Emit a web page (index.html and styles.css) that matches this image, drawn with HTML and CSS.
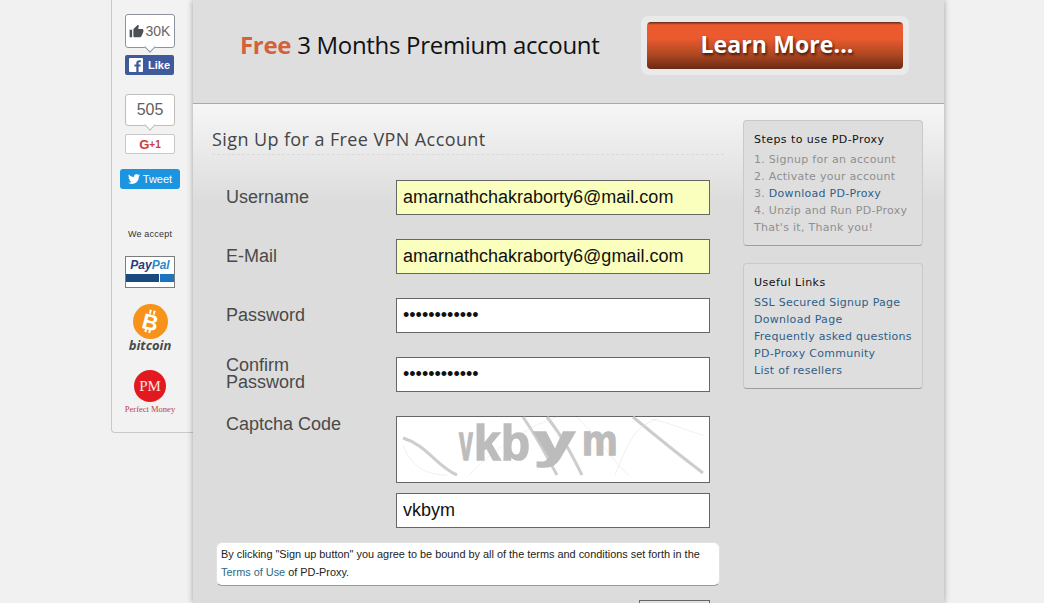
FILE: index.html
```html
<!DOCTYPE html>
<html lang="en">
<head>
<meta charset="utf-8">
<title>Sign Up for a Free VPN Account</title>
<link rel="stylesheet" href="styles.css">
</head>
<body>
<div class="page">
  <aside class="social">
    <div class="bubble bubble-like">
      <svg class="thumb" viewBox="0 0 24 24"><path d="M1 21h4V9H1v12zm22-11c0-1.1-.9-2-2-2h-6.31l.95-4.57.03-.32c0-.41-.17-.79-.44-1.06L14.17 1 7.59 7.59C7.22 7.95 7 8.45 7 9v10c0 1.1.9 2 2 2h9c.83 0 1.54-.5 1.84-1.22l3.02-7.05c.09-.23.14-.47.14-.73v-2z"/></svg>
      <span>30K</span>
    </div>
    <div class="fb-btn">
      <svg class="fb-icon" viewBox="0 0 14 14"><path fill="#fff" d="M1 0h12a1 1 0 0 1 1 1v12a1 1 0 0 1-1 1H9.6V8.6h1.8l.3-2.1H9.6V5.2c0-.6.2-1 1-1h1.2V2.3c-.2 0-.9-.1-1.700-.1-1.700 0-2.800 1-2.800 2.900v1.400H5.400v2.100h1.900V14H1a1 1 0 0 1-1-1V1a1 1 0 0 1 1-1z"/></svg>
      <span>Like</span>
    </div>
    <div class="bubble bubble-count">505</div>
    <div class="gplus-btn"><b>G</b><b class="plus">+1</b></div>
    <div class="tweet-btn">
      <svg class="bird" viewBox="0 0 24 24"><path fill="#fff" d="M23.953 4.57a10 10 0 01-2.825.775 4.958 4.958 0 002.163-2.723c-.951.555-2.005.959-3.127 1.184a4.92 4.92 0 00-8.384 4.482C7.69 8.095 4.067 6.13 1.64 3.162a4.822 4.822 0 00-.666 2.475c0 1.71.87 3.213 2.188 4.096a4.904 4.904 0 01-2.228-.616v.06a4.923 4.923 0 003.946 4.827 4.996 4.996 0 01-2.212.085 4.936 4.936 0 004.604 3.417 9.867 9.867 0 01-6.102 2.105c-.39 0-.779-.023-1.17-.067a13.995 13.995 0 007.557 2.209c9.053 0 13.998-7.496 13.998-13.985 0-.21 0-.42-.015-.63A9.935 9.935 0 0024 4.59z"/></svg>
      <span>Tweet</span>
    </div>
    <div class="accept">We accept</div>
    <div class="paypal">
      <div class="paypal-name"><span class="pay">Pay</span><span class="pal">Pal</span></div>
      <div class="paypal-bars"><i class="bar-dark"></i><i class="bar-light"></i></div>
    </div>
    <svg class="btc" viewBox="0 0 35 35">
      <circle cx="17.500" cy="17.500" r="17.500" fill="#f7931a"/>
      <g transform="rotate(14 17.500 17.500)" fill="#fff">
        <rect x="14" y="6" width="2" height="4"/><rect x="18" y="6" width="2" height="4"/>
        <rect x="14" y="25" width="2" height="4"/><rect x="18" y="25" width="2" height="4"/>
        <text x="17.500" y="26" text-anchor="middle" class="btc-b">B</text>
      </g>
    </svg>
    <div class="btc-name">bitcoin</div>
    <div class="pm-circle">PM</div>
    <div class="pm-name">Perfect Money</div>
  </aside>

  <main class="main">
    <header class="banner">
      <h2 class="promo"><span class="free">Free</span> 3 Months Premium account</h2>
      <div class="learn-frame"><a class="learn">Learn More...</a></div>
    </header>
    <div class="content">
      <section class="signup">
        <h1 class="title">Sign Up for a Free VPN Account</h1>
        <form class="form">
          <label class="label">Username</label>
          <input class="field autofill" type="text" readonly value="amarnathchakraborty6@mail.com">
          <label class="label">E-Mail</label>
          <input class="field autofill" type="text" readonly value="amarnathchakraborty6@gmail.com">
          <label class="label">Password</label>
          <input class="field" type="password" readonly value="amarnathcha1">
          <label class="label label-tight">Confirm Password</label>
          <input class="field" type="password" readonly value="amarnathcha1">
          <label class="label label-top">Captcha Code</label>
          <div class="captcha-col">
            <svg class="captcha" viewBox="0 0 312 65">
              <g fill="none" stroke="#cdcdcd">
                <path stroke-width="3" d="M6 21C30 28 40 50 60 58"/>
                <path stroke-width="3" d="M150 0C166 20 176 40 185 58"/>
                <path stroke-width="3" d="M126 0C140 20 150 40 160 58"/>
                <path stroke-width="3" d="M236 0C260 20 285 40 306 56"/>
                <path stroke-width=".5" stroke="#dedede" d="M6 28C14 50 30 58 50 58M72 58C100 30 130 10 160 0M180 0C210 30 220 50 232 58M218 58C230 30 235 10 260 2M255 2C280 8 290 14 306 18"/>
              </g>
              <g class="captcha-text">
                <text transform="translate(62 43) scale(.5 1)">v</text>
                <text transform="translate(77 43) scale(.95 1)">k</text>
                <text transform="translate(104 43) scale(.95 1)">b</text>
                <text class="captcha-y" transform="translate(137 40) scale(1.600 1)">y</text>
                <text class="captcha-m" transform="translate(185 38) scale(.95 1)">m</text>
              </g>
            </svg>
            <input class="field" type="text" readonly value="vkbym">
          </div>
        </form>
        <p class="terms">By clicking "Sign up button" you agree to be bound by all of the terms and conditions set forth in the <a class="terms-link">Terms of Use</a> of PD-Proxy.</p>
        <div class="submit-row"><button class="submit" type="button" aria-label="Sign Up"></button></div>
      </section>
      <aside class="side">
        <div class="panel">
          <h3 class="panel-title">Steps to use PD-Proxy</h3>
          <ul class="panel-list">
            <li>1. Signup for an account</li>
            <li>2. Activate your account</li>
            <li>3. <a class="link">Download PD-Proxy</a></li>
            <li>4. Unzip and Run PD-Proxy</li>
            <li>That's it, Thank you!</li>
          </ul>
        </div>
        <div class="panel">
          <h3 class="panel-title">Useful Links</h3>
          <ul class="panel-list">
            <li><a class="link">SSL Secured Signup Page</a></li>
            <li><a class="link">Download Page</a></li>
            <li><a class="link">Frequently asked questions</a></li>
            <li><a class="link">PD-Proxy Community</a></li>
            <li><a class="link">List of resellers</a></li>
          </ul>
        </div>
      </aside>
    </div>
  </main>
</div>
</body>
</html>
```
FILE: styles.css
```css
* { box-sizing: border-box; }
html, body { margin: 0; height: 603px; overflow: hidden; background: #f1f1f1; }
body { font-family: "Liberation Sans", Arial, sans-serif; color: #333; }

.page { display: flex; align-items: flex-start; margin-left: 111px; width: 833px; }

/* Left social column */
.social {
  width: 82px; height: 433px; flex: none;
  display: flex; flex-direction: column; align-items: center;
  padding-top: 14px; padding-right: 5px;
  background: #f2f2f2;
  border: 1px solid #c9c9c9; border-top: 0; border-right: 0;
  border-radius: 0 0 0 4px;
}
.bubble {
  position: relative; width: 50px;
  display: flex; align-items: center; justify-content: center;
  background: #fff; border: 1px solid #bdbdbd; border-radius: 3px;
  color: #666; font-size: 14px;
}
.bubble::after {
  content: ""; position: absolute; left: 50%; bottom: -4px;
  width: 7px; height: 7px; margin-left: -4px;
  background: #fff; border: 1px solid #bdbdbd; border-top: 0; border-left: 0;
  transform: rotate(45deg);
}
.bubble-like { height: 34px; gap: 2px; border-color: #8f949c; margin-right: 1px; }
.bubble-like::after { border-color: #8f949c; }
.bubble-count { height: 32px; margin-top: 19px; font-size: 16px; color: #5f5f5f; }
.thumb { width: 15px; height: 15px; fill: #4b4f56; }
.fb-btn {
  width: 49px; height: 20px; margin-top: 7px; margin-right: 1px;
  display: flex; align-items: center; gap: 5px; padding-left: 4px;
  background: #3f5a9c; border-radius: 2px;
  color: #fff; font-size: 11px; font-weight: 700;
}
.fb-icon { width: 14px; height: 14px; }
.gplus-btn {
  width: 50px; height: 20px; margin-top: 8px;
  display: flex; align-items: center; justify-content: center;
  background: #fff; border: 1px solid #c8c8c8; border-radius: 2px;
  color: #c8413a; font-size: 13px;
}
.gplus-btn .plus { font-size: 10px; }
.tweet-btn {
  width: 60px; height: 20px; margin-top: 15px;
  display: flex; align-items: center; justify-content: center; gap: 3px;
  background: #1b95e0; border-radius: 3px;
  color: #fff; font-size: 11px; font-weight: 400;
}
.bird { width: 12px; height: 12px; }
.accept { margin-top: 39px; font-size: 9px; line-height: 12px; color: #333; letter-spacing: .2px; }
.paypal {
  width: 50px; height: 32px; margin-top: 16px;
  background: #fff; border: 1px solid #7d7d7d;
}
.paypal-name { height: 17px; text-align: center; font: italic 700 12px/17px "Liberation Sans", sans-serif; }
.pay { color: #253b80; }
.pal { color: #2f8ac9; }
.paypal-bars { display: flex; gap: 1px; }
.bar-dark { width: 33px; height: 8px; background: #1b4a7f; }
.bar-light { flex: 1; height: 8px; background: #1b74bd; }
.btc { width: 35px; height: 35px; margin-top: 16px; }
.btc-b { font: 700 22px "Liberation Sans", sans-serif; }
.btc-name { margin-top: -1px; font: italic 700 13px/14px "Open Sans", sans-serif; color: #4a4a4a; }
.pm-circle {
  width: 32px; height: 32px; margin-top: 18px; border-radius: 50%;
  display: flex; align-items: center; justify-content: center;
  background: #e21a1f; color: #fbe3e3; font: 400 15px "Liberation Serif", serif;
}
.pm-name { margin-top: 1px; font: 400 8.500px/12px "Liberation Serif", serif; color: #c23c44; white-space: nowrap; }

/* Main */
.main {
  width: 751px; height: 603px; flex: none;
  background: #dcdcdc;
  box-shadow: 0 0 6px rgba(0, 0, 0, .35);
}
.banner {
  height: 104px; display: flex; align-items: flex-start; justify-content: space-between;
  padding: 16px 35px 0 47px;
  background: #dedede; border-bottom: 1px solid #a9a9a9;
}
.promo {
  margin: 12px 0 0; font: 400 24px/34px "Open Sans", sans-serif; color: #111;
  letter-spacing: -.3px;
}
.free { color: #d3623c; font-weight: 700; }
.learn-frame { padding: 6px; background: #eaeaea; border-radius: 8px; }
.learn {
  display: block; width: 256px; height: 47px; padding-left: 4px;
  text-align: center; font: 700 23px/45px "Open Sans", sans-serif; letter-spacing: .1px;
  color: #fff; text-shadow: 1px 2px 3px #3a1206;
  background: linear-gradient(#5f2a15 0, #ea5a2e 6%, #ea5a2e 35%, #ad4722 70%, #6a2b13 100%);
  border-radius: 4px;
}
.content {
  display: flex; align-items: flex-start; gap: 19px;
  height: 499px; padding: 16px 21px 0 19px;
  background: linear-gradient(#f6f6f6 0, #dcdcdc 100px);
}
.signup { width: 512px; flex: none; }
.title {
  margin: 0; height: 35px; padding-top: 7px;
  font: 400 18px/24px "Open Sans", sans-serif; letter-spacing: .4px; color: #444;
  border-bottom: 1px dashed #dadada;
}
.form {
  display: grid; grid-template-columns: 170px 314px; row-gap: 24px;
  padding: 25px 0 0 14px;
}
.label { font-size: 18px; line-height: 17px; color: #4a4a4a; align-self: center; }
.label-top { align-self: start; }
.label-tight { width: 110px; align-self: start; }
.field {
  display: block; width: 314px; height: 35px; padding: 0 6px;
  background: #fff; border: 1px solid #666; border-radius: 0; outline: 0;
  font: 400 18px "Liberation Sans", sans-serif; color: #111;
}
.autofill { background: #fbffbd; }
.captcha-col { display: flex; flex-direction: column; gap: 10px; }
.captcha { display: block; width: 314px; height: 67px; background: #fff; border: 1px solid #666; overflow: visible; }
.captcha-text { font: 700 50px "Liberation Sans", sans-serif; fill: #bcbcbc; stroke: #bcbcbc; stroke-width: 1.500; }
.captcha-y { font-size: 46px; }
.captcha-m { font-size: 42px; }
.terms {
  width: 504px; height: 44px; margin: 14px 0 0 4px; padding: 2px 4px;
  background: #fff; border: 1px solid #e2e2e2; border-bottom-color: #9a9a9a; border-radius: 6px;
  font-size: 10.900px; line-height: 18px; color: #222;
}
.terms-link { color: #2a6a86; }
.submit-row { display: flex; justify-content: flex-end; padding: 14px 14px 0 0; }
.submit {
  display: block; width: 71px; height: 3px; padding: 0; background: #e0e0e0;
  border: 1px solid #666; border-bottom: 0;
}

/* Right column */
.side { width: 180px; flex: none; display: flex; flex-direction: column; gap: 17px; }
.panel {
  height: 126px; padding: 10px 10px 0;
  background: #dedede; border: 1px solid #c9c9c9; border-bottom-color: #9e9e9e;
  border-radius: 4px;
  font: 400 11px/17px "DejaVu Sans", Verdana, sans-serif;
}
.panel-title { margin: 0; font: inherit; color: #111; letter-spacing: .45px; }
.panel-list { margin: 3px 0 0; padding: 0; list-style: none; color: #8f8f8f; white-space: nowrap; letter-spacing: .28px; }
.link { color: #2f5f88; }
```
